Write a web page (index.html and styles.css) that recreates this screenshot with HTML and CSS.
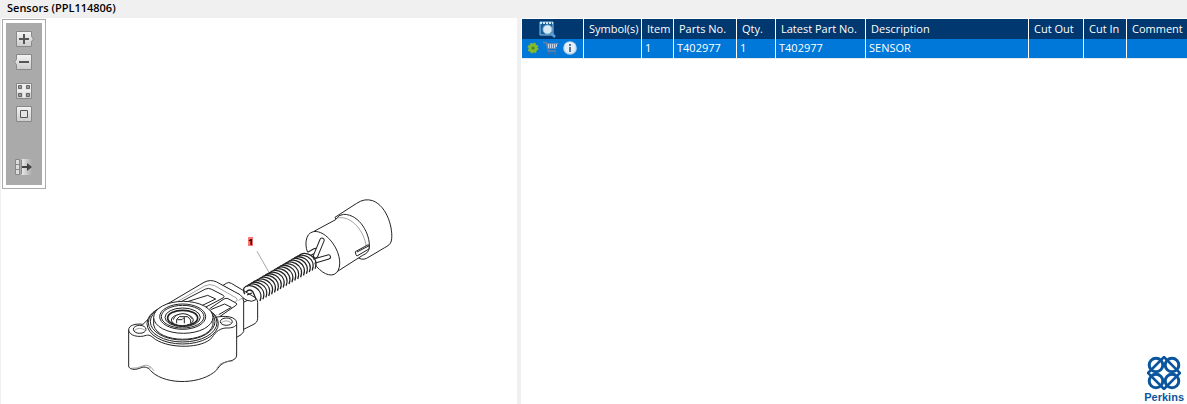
FILE: index.html
```
<!DOCTYPE html>
<html lang="en">
<head>
  <meta charset="UTF-8">
  <meta name="viewport" content="width=device-width, initial-scale=1.0">
  <title>Sensors (PPL114806)</title>
  <link rel="stylesheet" href="styles.css">
</head>

<body>
  <h1>Sensors (PPL114806)</h1>

  <main>
    <section class="drawing">
      <div class="toolbar">
        <div class="tools">
          <button type="button" aria-label="Zoom in">
            <svg width="20" height="18" viewBox="0 0 20 18"><path class="key" d="M2.5 1.5h15v5l2 2.5-2 2.500v5h-15z"/><path class="sign" d="M5 9h10M10 4v10"/></svg>
          </button>
          <button type="button" aria-label="Zoom out">
            <svg width="20" height="18" viewBox="0 0 20 18"><path class="key" d="M2.5 1.500h15v15h-15v-5L.5 9l2-2.500z"/><path class="sign" d="M5 9h10"/></svg>
          </button>
          <button type="button" class="group" aria-label="Fit all">
            <svg width="20" height="18" viewBox="0 0 20 18"><path class="key" d="M2.500 1.500h15v15h-15z"/><path d="M10 2v14M3 9h14" stroke="#eee" stroke-width="2"/><path d="M4.500 3.500h3v3h-3zM12.500 3.500h3v3h-3zM4.500 11.500h3v3h-3zM12.500 11.500h3v3h-3z" fill="#999" stroke="#666"/></svg>
          </button>
          <button type="button" aria-label="Actual size">
            <svg width="20" height="18" viewBox="0 0 20 18"><path class="key" d="M2.500 1.500h15v15h-15z"/><path d="M6.500 5.500h7v7h-7z" fill="#e4e4e4" stroke="#555"/></svg>
          </button>
          <button type="button" class="last" aria-label="Hide list">
            <svg width="20" height="18" viewBox="0 0 20 18"><path d="M7 1h11v16H7z" fill="url(#fade)"/><path d="M1.500 1.500h4v15h-4zM1.500 6.500h4M1.500 11.500h4M7.500 1.500v15" fill="#ddd" stroke="#888"/><path d="M8 9h7" stroke="#444" stroke-width="2"/><path d="M13 5l5 4-5 4z" fill="#444"/></svg>
          </button>
        </div>
      </div>

      <svg class="sensor" width="280" height="200" viewBox="120 190 280 200" role="img" aria-label="Sensor">
        <defs>
          <linearGradient id="face" x2="0" y2="1"><stop stop-color="#f4f4f4"/><stop offset="1" stop-color="#ccc"/></linearGradient>
          <linearGradient id="fade"><stop stop-color="#eee"/><stop offset="1" stop-color="#aaa"/></linearGradient>
          <path id="coil" d="M244 288c4-6 21 0 16 13"/>
        </defs>

        <!-- housing -->
        <g class="line" transform="translate(120 270) scale(.3333)">
          <path d="M303 50l16-10q7-5 15 0l72 43q7 5 7 14v48q0 13-14 19l-30 15"/>
          <path d="M313 49l68 42q14 7 29-3M381 92l-11 5"/>
          <path d="M120 115L252 37q19-10 38-1l70 38q11 7 11 20v91q-5 10-21 17l-50 8z"/>
          <path class="thin" d="M140 113L254 48q15-8 30-1l65 37q7 6-2 12l-63 42M356 91l14-9"/>
          <path d="M187 93l70-36q9-4 18 1l35 18q5 4-1 8l-68 36"/>
          <path d="M205 94l58-18 24 11-52 25"/>
          <path d="M269 116l43-29q6-4 12-1l24 13q5 3 0 7l-49 34"/>
          <path d="M272 119l42-17 20 10-38 22"/>
          <path d="M26 180c0-14 19-20 43-17l30-30q95-50 184 10c30-8 67-4 67 16v96q0 14-20 18c-21 3-31 14-40 27-43 43-149 47-194 6-10-12-19-19-35-12-18 8-35 3-35-6z"/>
          <path d="M26 180c1 17 30 24 53 16 12-3 17 5 27 12 44 29 141 28 170-5 11-18 26-31 50-29 15-1 24-6 24-14"/>
          <path class="thin" d="M33 295q19 1 37-8 16-7 32 15M290 295q14-22 48-22M64 291l27 3M299 283l27-9"/>
          <ellipse cx="59" cy="178" rx="19" ry="12"/><path class="thin" d="M42 182q17-14 35 0"/>
          <ellipse cx="319" cy="155" rx="18" ry="11"/><path class="thin" d="M303 159q15-13 32 0"/>
          <ellipse cx="188" cy="161" rx="107" ry="61"/>
          <ellipse cx="188" cy="158" rx="103" ry="58"/>
          <ellipse cx="188" cy="155" rx="97" ry="55"/>
          <path d="M101 143v22c12 56 160 58 178 0v-22"/>
          <ellipse cx="190" cy="142" rx="89" ry="48"/>
          <ellipse cx="188" cy="140" rx="69" ry="38"/>
          <ellipse cx="188" cy="140" rx="64" ry="34"/>
          <ellipse cx="188" cy="142" rx="53" ry="28"/>
          <ellipse cx="188" cy="144" rx="45" ry="23" stroke-width="5"/>
          <ellipse cx="187" cy="150" rx="33" ry="17"/>
          <path d="M160 149q4-17 29-18 20 1 26 15M170 160v-12l8-8h25l9 10v10M172 149h14l7-7v18"/>
        </g>

        <!-- plug -->
        <g class="line" transform="translate(235 190) scale(.3333)">
          <path d="M300 82l65-42q24-16 48-8c45 17 63 88 56 121-2 9-10 15-20 20l-54 32q-15 8-33-7z"/>
          <path d="M237 124l65-35q9-16 24-16c49 0 80 61 77 99-1 14-9 19-20 24l-91 58z"/>
          <path class="thin" d="M306 84c45-10 84 45 87 84"/>
          <path d="M235 125c-26 5-28 48-12 72 17 33 43 59 67 58 25-3 30-36 18-68-14-36-46-67-73-62z"/>
          <path d="M361 185l39-21q4 6 2 13l-36 21q-5-4-5-13zM366 186l35-18"/>
          <path class="wire" d="M213 197l27-15"/><path class="core" d="M213 197l27-15"/>
          <path class="wire" d="M232 215l48-14"/><path class="core" d="M232 215l48-14"/>
          <path class="wire" d="M242 197l19-46"/><path class="core" d="M242 197l19-46"/>
          <path class="thin" d="M66 184l36 63"/>
        </g>

        <!-- conduit -->
        <path d="M244 288L304 252C310 250 316 262 315 270L260 301z" fill="#fff"/>
        <g class="coils">
          <use href="#coil"/><use href="#coil" x="2.900" y="-1.700"/><use href="#coil" x="5.800" y="-3.400"/>
          <use href="#coil" x="8.700" y="-5.100"/><use href="#coil" x="11.600" y="-6.800"/><use href="#coil" x="14.500" y="-8.500"/>
          <use href="#coil" x="17.400" y="-10.200"/><use href="#coil" x="20.300" y="-11.900"/><use href="#coil" x="23.200" y="-13.600"/>
          <use href="#coil" x="26.100" y="-15.300"/><use href="#coil" x="29" y="-17"/><use href="#coil" x="31.900" y="-18.700"/>
          <use href="#coil" x="34.800" y="-20.400"/><use href="#coil" x="37.700" y="-22.100"/><use href="#coil" x="40.600" y="-23.800"/>
          <use href="#coil" x="43.500" y="-25.500"/><use href="#coil" x="46.400" y="-27.200"/><use href="#coil" x="49.300" y="-28.900"/>
          <use href="#coil" x="52.200" y="-30.600"/><use href="#coil" x="55.100" y="-32.300"/>
        </g>
        <path class="end" d="M244 288q-1 4 1 6M246 292q4-4 7 0l3 7M247 295l5-2"/>

        <rect x="248" y="237" width="5" height="9" fill="#f77"/>
        <text x="248" y="245">1</text>
      </svg>
    </section>

    <section class="parts">
      <table>
        <colgroup>
          <col class="w-icons"><col class="w-symbol"><col class="w-item"><col class="w-part"><col class="w-qty">
          <col class="w-latest"><col><col class="w-out"><col class="w-in"><col class="w-comment">
        </colgroup>
        <thead>
          <tr>
            <th class="preview">
              <svg width="17" height="17" viewBox="0 0 17 17"><path d="M1 1h13v13H1z" fill="#16609c" stroke="#8fc3e8"/><path d="M1 2h13" stroke="#cde8f8" stroke-width="2" stroke-dasharray="2 1"/><path d="M12 12l4 4" stroke="#5b9fd5" stroke-width="2.500"/><circle cx="8.500" cy="8.500" r="4.500" fill="#d4e9f4" stroke="#8db9d5"/></svg>
            </th>
            <th>Symbol(s)</th>
            <th>Item</th>
            <th>Parts No.</th>
            <th>Qty.</th>
            <th>Latest Part No.</th>
            <th>Description</th>
            <th>Cut Out</th>
            <th>Cut In</th>
            <th>Comment</th>
          </tr>
        </thead>
        <tbody>
          <tr>
            <td>
              <div class="actions">
                <svg width="12" height="12" viewBox="0 0 12 12"><circle cx="6" cy="6" r="4.500" fill="#83bb2c" stroke="#83bb2c" stroke-width="2" stroke-dasharray="2 1.530"/><circle cx="6" cy="6" r="4" fill="#83bb2c"/><circle cx="6" cy="6" r="1.500" fill="#4c8420"/></svg>
                <svg width="16" height="14" viewBox="0 0 16 14" fill="none"><path d="M3 2h12l-2 5H5z" fill="#5f8fc4"/><path d="M0 1.500h3l2.500 8.500H13" stroke="#6482a8" stroke-width="1.300"/><path d="M3.500 2.500h12M4.500 7.500h9" stroke="#6c87a8"/><path d="M5.500 3v4M7.500 3v4M9.500 3v4M11.500 3v4M13.500 3v3" stroke="#c3d5e8"/><circle cx="6" cy="12.500" r="1.300" fill="#50698c"/><circle cx="12" cy="12.500" r="1.300" fill="#50698c"/></svg>
                <svg width="14" height="14" viewBox="0 0 14 14"><circle cx="7" cy="7" r="6.800" fill="#bcd7ee"/><circle cx="7" cy="6.500" r="5.500" fill="#e5eff6"/><path d="M7 3v2M7 6v5" stroke="#53779b" stroke-width="2"/></svg>
              </div>
            </td>
            <td></td>
            <td>1</td>
            <td>T402977</td>
            <td>1</td>
            <td>T402977</td>
            <td>SENSOR</td>
            <td></td>
            <td></td>
            <td></td>
          </tr>
        </tbody>
      </table>

      <div class="brand">
        <svg width="34" height="34" viewBox="0 0 34 34" fill="none" stroke="#0b559f" stroke-width="3">
          <circle cx="9" cy="9" r="6.800"/><circle cx="25" cy="9" r="6.800"/><circle cx="9" cy="25" r="6.800"/><circle cx="25" cy="25" r="6.800"/>
          <path d="M1 17L17 1l16 16-16 16z" stroke-width="2.600"/>
        </svg>
        <span>Perkins</span>
      </div>
    </section>
  </main>
</body>
</html>
```
FILE: styles.css
```
* {
  box-sizing: border-box;
}

body {
  display: flex;
  flex-direction: column;
  min-height: 100vh;
  margin: 0;
  background-color: #f0f0f0;
  color: #000;
  font-family: "Open Sans", "Noto Sans", sans-serif;
  font-size: 11px;
}

h1 {
  margin: 0;
  padding: 0 0 2px 7px;
  font-size: 11px;
  font-weight: 600;
  line-height: 16px;
}

main {
  display: grid;
  grid-template-columns: 516fr 666fr;
  column-gap: 4px;
  flex: 1;
  padding-left: 1px;
}

.drawing {
  display: flex;
  align-items: flex-start;
  padding: 1px;
  background-color: #fff;
}

.toolbar {
  padding: 3px;
  border: 1px solid #aaa;
}

.tools {
  display: flex;
  flex-direction: column;
  align-items: center;
  gap: 5px;
  width: 36px;
  padding: 7px 0 9px;
  background-color: #aaa;
}

button {
  display: block;
  padding: 0;
  border: none;
  background: none;
  cursor: pointer;
}

button svg {
  display: block;
}

.group {
  margin-top: 6px;
}

.last {
  margin-top: 30px;
}

.key {
  fill: url(#face);
  stroke: #888;
}

.sign {
  stroke: #555;
  stroke-width: 2;
}

.sensor {
  margin: 171px 0 0 74px;
}

.sensor text {
  font-size: 9px;
  font-weight: 700;
}

.line {
  fill: #fff;
  stroke: #222;
  stroke-width: 3;
  stroke-linejoin: round;
}

.thin {
  fill: none;
  stroke: #777;
  stroke-width: 2;
}

.wire {
  stroke-width: 16;
  stroke-linecap: round;
}

.core {
  stroke: #fff;
  stroke-width: 10;
  stroke-linecap: round;
}

.coils,
.end {
  fill: none;
  stroke: #222;
  stroke-width: 1.300;
}

.parts {
  display: flex;
  flex-direction: column;
  padding: 1px 0 0 1px;
  background-color: #fff;
}

table {
  width: 100%;
  table-layout: fixed;
  border-collapse: separate;
  border-spacing: 0;
  border-bottom: 1px solid #e8e8e8;
  color: #fff;
}

th,
td {
  border-right: 1px solid #fff;
  text-align: left;
  font-weight: 400;
  line-height: 16px;
  white-space: nowrap;
}

th:last-child,
td:last-child {
  border-right: none;
}

th {
  height: 20px;
  padding: 0 0 1px 5px;
  background-color: #00386f;
}

td {
  height: 19px;
  padding: 0 0 1px 3px;
  background-color: #0078d9;
}

.preview {
  padding: 0 10px 0 0;
  text-align: center;
}

.preview svg {
  display: block;
  margin: auto;
}

.actions {
  display: flex;
  align-items: center;
  gap: 4px;
  padding-left: 2px;
}

.w-icons { width: 62px; }
.w-symbol { width: 58px; }
.w-item { width: 32px; }
.w-part { width: 63px; }
.w-qty { width: 39px; }
.w-latest { width: 90px; }
.w-out { width: 55px; }
.w-in { width: 43px; }
.w-comment { width: 60px; }

.brand {
  display: flex;
  flex-direction: column;
  align-items: center;
  align-self: flex-end;
  margin-top: auto;
  padding-right: 3px;
  color: #0b559f;
  font: bold 11px/14px "Liberation Sans", Arial, sans-serif;
}
```
